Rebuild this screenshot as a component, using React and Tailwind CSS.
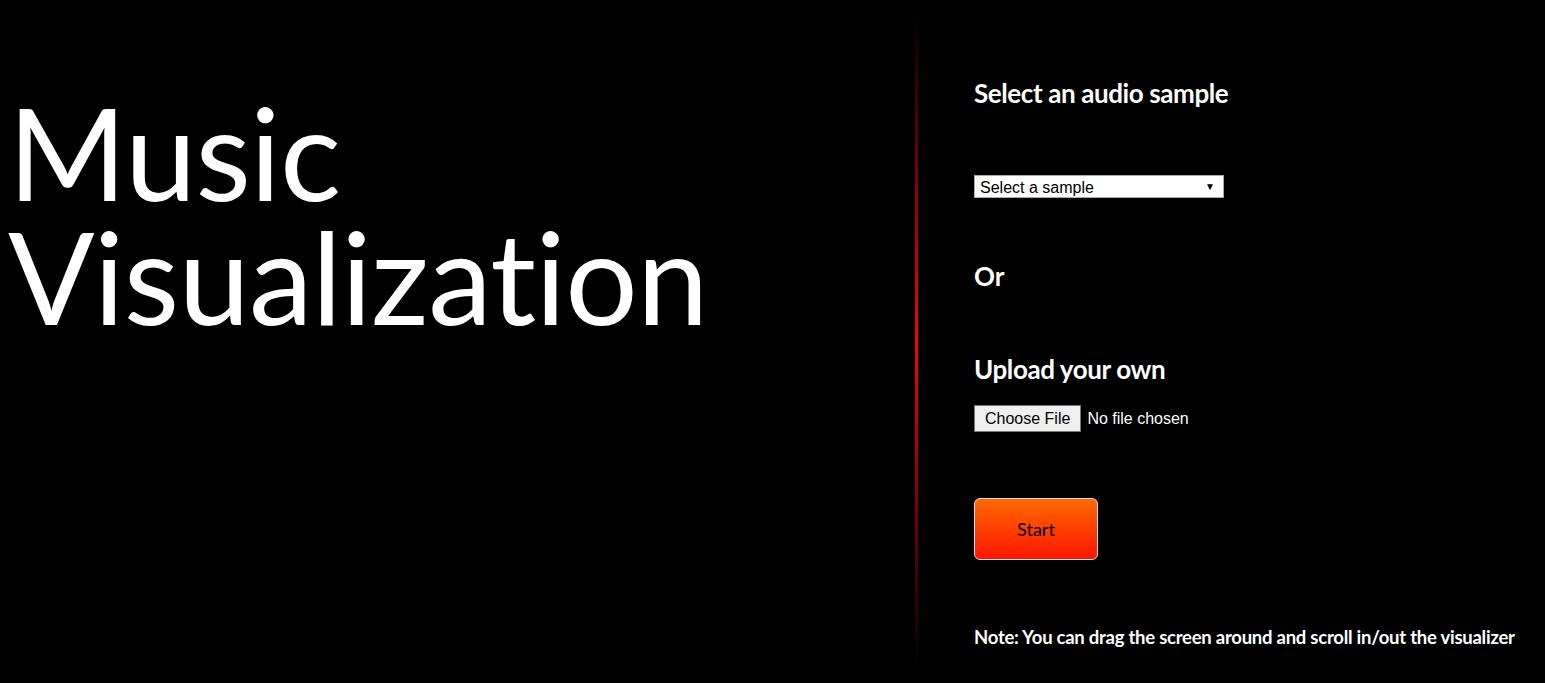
import React from 'react';

const heading = "font-['Lato','Open_Sans',sans-serif]";
const arial = "font-['Liberation_Sans',Arial,sans-serif]";

export default function App() {
    return (
        <div className="w-full h-[683px] bg-black text-white flex overflow-hidden">
            <div className="w-[915px] shrink-0 pt-[90px] pl-[8px]">
                <h1 className={`${heading} text-[128px] leading-[124px] font-normal tracking-[-0.8px]`}>
                    <div>Music</div>
                    <div>Visualization</div>
                </h1>
            </div>

            {/* red divider, fades at both ends */}
            <div className="w-[3px] shrink-0 my-[14px] bg-[linear-gradient(to_bottom,rgba(255,0,0,0),#ff0000_50%,rgba(255,0,0,0))]" />

            <div className={`flex-1 pl-[56px] pt-[77px] ${heading}`}>
                <h2 className="text-[26px] leading-[32px] font-bold tracking-[-0.4px]">Select an audio sample</h2>

                <div className="relative mt-[66px] w-[250px] h-[23px]">
                    <select className={`w-full h-full bg-white text-black border border-[#a9a9a9] text-[16px] ${arial} pl-[5px] appearance-none outline-none`}>
                        <option>Select a sample</option>
                    </select>
                    <span className="absolute right-[9px] top-[6px] text-black text-[10px] leading-none pointer-events-none">▼</span>
                </div>

                <h2 className="mt-[62px] text-[26px] leading-[32px] font-bold">Or</h2>

                <h2 className="mt-[61px] text-[26px] leading-[32px] font-bold tracking-[-0.4px]">Upload your own</h2>

                <div className={`mt-[20px] flex items-center gap-[6px] ${arial} text-[16px]`}>
                    <span className="h-[27px] px-[10px] flex items-center bg-[#efefef] text-black border border-[#767676]">Choose File</span>
                    <span>No file chosen</span>
                </div>

                <button className="mt-[66px] w-[124px] h-[62px] rounded-[6px] border border-[#dddddd] bg-[linear-gradient(to_bottom,#ff6a00,#ff1500)] text-black text-[18px]">
                    Start
                </button>

                <p className="mt-[64px] text-[18.5px] font-bold tracking-[-0.25px]">
                    Note: You can drag the screen around and scroll in/out the visualizer
                </p>
            </div>
        </div>
    );
}
